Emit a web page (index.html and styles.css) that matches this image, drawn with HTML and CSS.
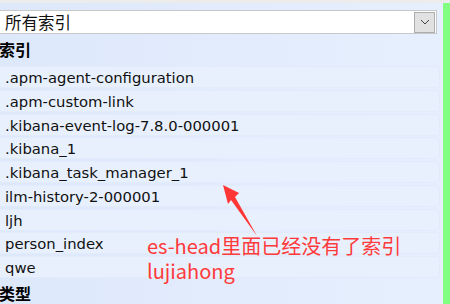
FILE: index.html
```html
<!DOCTYPE html>
<html>
<head>
<meta charset="utf-8">
<link rel="stylesheet" href="styles.css">
</head>
<body>
<div class="topbar"></div>
<div class="frame">
  <div class="main">
    <div class="select">
      <span class="select-text">所有索引</span>
      <span class="select-btn">
        <svg width="10" height="6" viewBox="0 0 10 6"><path d="M1 1 L5 5 L9 1" fill="none" stroke="#444" stroke-width="1"/></svg>
      </span>
    </div>
    <div class="section-title">索引</div>
    <ul class="list">
      <li>.apm-agent-configuration</li>
      <li>.apm-custom-link</li>
      <li>.kibana-event-log-7.8.0-000001</li>
      <li>.kibana_1</li>
      <li>.kibana_task_manager_1</li>
      <li>ilm-history-2-000001</li>
      <li>ljh</li>
      <li>person_index</li>
      <li>qwe</li>
    </ul>
    <div class="section-title">类型</div>
  </div>
  <div class="strip"></div>
</div>
<div class="note">es-head里面已经没有了索引<br>lujiahong</div>
<svg class="arrow" width="450" height="304" viewBox="0 0 450 304">
  <polygon points="223,185 239,193 235,197 257,236 231,200 228,204" fill="#ff3636"/>
</svg>
</body>
</html>
```
FILE: styles.css
```css
html, body {
  margin: 0;
  padding: 0;
  width: 450px;
  height: 304px;
  overflow: hidden;
  background: #e4edfc;
}
body {
  position: relative;
  font-family: "DejaVu Sans", Verdana, sans-serif;
}
.topbar {
  height: 3px;
  background: #ececec;
}
.frame {
  display: flex;
  height: 301px;
}
.main {
  flex: 1;
  background: linear-gradient(90deg, #dde8fb 0%, #e6effd 100%);
  padding-top: 7px;
}
.strip {
  width: 7px;
  background: #80ff80;
}
.select {
  display: flex;
  align-items: center;
  height: 22px;
  width: 436px;
  background: #fff;
  border: 1px solid #c8c8c8;
  border-left: none;
  box-sizing: content-box;
}
.select-text {
  flex: 1;
  padding-left: 5px;
  font-family: "Noto Sans CJK SC", sans-serif;
  font-size: 16.5px;
  color: #111;
  line-height: 22px;
}
.select-btn {
  width: 19px;
  height: 19px;
  margin-right: 1px;
  background: #e1e1e1;
  border: 1px solid #adadad;
  display: flex;
  align-items: center;
  justify-content: center;
}
.section-title {
  font-family: "Noto Sans CJK SC", sans-serif;
  font-weight: bold;
  font-size: 16px;
  color: #000;
  line-height: 24px;
  height: 24px;
  margin-top: 3px;
  margin-left: -1px;
}
.list {
  list-style: none;
  margin: 5px 0 0 0;
  padding: 0;
  width: 440px;
}
.list li {
  height: 22px;
  line-height: 21px;
  margin-bottom: 1.75px;
  padding-left: 5px;
  background: #e8f0fe;
  border: 1px solid #e2ebfb;
  border-left: none;
  border-radius: 0 4px 4px 0;
  font-size: 14.8px;
  color: #111;
  box-sizing: border-box;
}
.note {
  position: absolute;
  left: 147px;
  top: 233px;
  font-family: "Noto Sans CJK SC", sans-serif;
  font-size: 20px;
  line-height: 25px;
  color: #ff3a3a;
}
.arrow {
  position: absolute;
  left: 0;
  top: 0;
}
```
